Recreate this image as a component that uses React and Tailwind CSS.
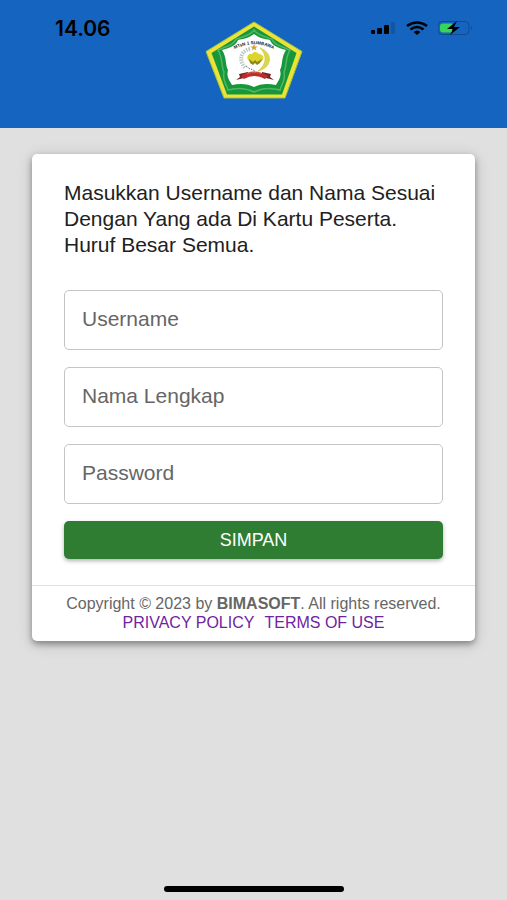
import { useState } from "react";

const fields = [
  { id: "username", label: "Username", type: "text" },
  { id: "fullname", label: "Nama Lengkap", type: "text" },
  { id: "password", label: "Password", type: "password" },
];

function SchoolLogo() {
  return (
    <svg viewBox="0 0 98 78" className="h-[78px] w-[98px]" role="img" aria-label="MTsN 1 Sumbawa">
      <path d="M49 1 97 30.500 80 77H19L1 30.500Z" fill="#ece238" stroke="#9ec43c" />
      <path d="M49 5.500 91.500 32 77 73.500H22L6.500 32Z" fill="#16973a" />
      <path
        d="M49 9C53 15 61 16 67 18C69 24 76 25 85 29C80 37 82 45 79 51C81 59 77 62 75 69C64 66 57 67 49 71C41 67 34 66 23 69C21 62 17 59 19 51C16 45 18 37 13 29C22 25 29 24 31 18C37 16 45 15 49 9Z"
        fill="none"
        stroke="#54b568"
        strokeWidth="1.500"
      />
      <path
        d="M49 13C54 17 60 18 65 19C67 25 74 27 81 29C76 36 78 44 75 49C77 56 73 60 71 64C62 62 55 63 49 66C43 63 36 62 27 64C25 60 21 56 23 49C20 44 22 36 17 29C24 27 31 25 33 19C38 18 44 17 49 13Z"
        fill="#fff"
      />
      <path id="logo-arc" d="M27 29.500Q49 17 71 29.500" fill="none" />
      <text fontSize="4.500" fontWeight="700" fontFamily="Liberation Sans, sans-serif" fill="#222">
        <textPath href="#logo-arc" startOffset="50%" textAnchor="middle">
          MTsN 1 SUMBAWA
        </textPath>
      </text>
      <path d="M45 28C34 30 34 42 41 47" fill="none" stroke="#bfc8c4" strokeWidth="4" strokeDasharray="1.500 1" />
      <path d="M55 27C69 32 67 47 53 50C62 43 62 34 55 27Z" fill="#ddd64b" stroke="#c9c342" strokeWidth=".6" />
      <path d="m49 23 1 2.500h3l-2.500 1.500 1 2.500-2.500-1.500-2.500 1.500 1-2.500-2.500-1.500h3z" fill="#c9a43a" />
      <path d="M44 40C40 36 44 32 47 33C49 30 52 31 54 33C58 33 60 37 57 40L52 42 50 40 48 42Z" fill="#ded52c" />
      <path d="m44 38 4 3 2-2 2 2 5-3-2 4-3 2-2-2-2 2-3-2z" fill="#8d8718" />
      <path d="M41 45l4 3M46 48l4 2" stroke="#555" strokeDasharray="1 1" />
      <path d="m31 59 4-3-1-3 9-2v4l-4 2zm38 0-4-3 1-3-9-2v4l4 2z" fill="#762626" />
      <path d="M36 55Q49 46 63 55L60 58Q49 52 39 58Z" fill="#be2d29" />
      <path d="M42 53Q49 50 57 53" fill="none" stroke="#df8178" strokeDasharray="1 .7" />
    </svg>
  );
}

function StatusIcons() {
  return (
    <div className="flex items-center gap-[10px] text-black">
      <svg viewBox="0 0 26 12" className="h-3 w-[26px]" aria-hidden="true">
        <rect x="1" y="8" width="4" height="4" rx="1" />
        <rect x="7" y="6" width="5" height="6" rx="1" />
        <rect x="14" y="3" width="5" height="9" rx="1" />
        <rect x="21" width="4" height="12" rx="1" opacity=".15" />
      </svg>
      <svg viewBox="0 0 22 14" className="h-[14px] w-[22px]" fill="none" stroke="currentColor" strokeWidth="2.600" aria-hidden="true">
        <path d="M1 5Q11-2 21 5M4.500 8.500Q11 3.500 17.500 8.500" />
        <path d="M7.500 11Q11 8 14.500 11L11 14Z" fill="currentColor" stroke="none" />
      </svg>
      <svg viewBox="0 0 35 16" className="h-4 w-[35px]" aria-hidden="true">
        <rect x="0" y="1.500" width="31" height="13" rx="4" fill="none" stroke="#124a8e" />
        <path d="M5 3.500h9v9H5q-3 0-3-3v-3q0-3 3-3Z" fill="#35d65b" />
        <path d="M33 6q2 2 0 4z" fill="#124a8e" />
        <path d="m19 1-10 8h6l-3 6 10-8h-6z" />
      </svg>
    </div>
  );
}

function TextField({ id, label, type, value, onChange }) {
  return (
    <div className="relative">
      <input
        id={id}
        name={id}
        type={type}
        placeholder=" "
        value={value}
        onChange={onChange}
        className="peer block h-[60px] w-full rounded-[5px] border border-[#c4c4c4] px-[18px] text-[21px] text-[#212121] focus:outline-[#1565c0]"
      />
      <label
        htmlFor={id}
        className="pointer-events-none absolute -top-2 left-[14px] bg-white px-1 text-xs leading-4 text-[#666] peer-placeholder-shown:top-4 peer-placeholder-shown:text-[21px] peer-placeholder-shown:leading-[26px]"
      >
        {label}
      </label>
    </div>
  );
}

export default function App() {
  const [values, setValues] = useState({ username: "", fullname: "", password: "" });

  const handleChange = (e) => {
    setValues({ ...values, [e.target.name]: e.target.value });
  };

  return (
    <div className="flex min-h-screen flex-col bg-[#e0e0e0] font-['Liberation_Sans',Arial,sans-serif]">
      <header className="grid h-32 grid-cols-[1fr_auto_1fr] items-start bg-[#1565c0]">
        <time className="pt-4 pl-[55px] font-['Inter','Liberation_Sans',sans-serif] text-[21px] leading-[26px] font-semibold text-black">
          14.06
        </time>
        <div className="pt-[21px]">
          <SchoolLogo />
        </div>
        <div className="flex justify-end pt-5 pr-[34px]">
          <StatusIcons />
        </div>
      </header>

      <main className="px-8 pt-[26px]">
        <div className="rounded-[5px] bg-white shadow-[0_3px_6px_rgba(0,0,0,0.35),0_3px_16px_rgba(0,0,0,0.16)]">
          <form className="px-8 pt-[26px] pb-[26px]" onSubmit={(e) => e.preventDefault()}>
            <p className="mb-[32px] text-[21px] leading-[26px] text-[#212121]">
              Masukkan Username dan Nama Sesuai
              <br />
              Dengan Yang ada Di Kartu Peserta.
              <br />
              Huruf Besar Semua.
            </p>
            <div className="flex flex-col gap-[17px]">
              {fields.map((field) => (
                <TextField key={field.id} {...field} value={values[field.id]} onChange={handleChange} />
              ))}
              <button
                type="submit"
                className="h-[38px] rounded-[5px] bg-[#2e7d32] text-[18px] text-white shadow-[0_2px_4px_rgba(0,0,0,0.3)]"
              >
                SIMPAN
              </button>
            </div>
          </form>
          <footer className="border-t border-[#e0e0e0] pt-2 pb-[9px] text-center text-[16px] leading-[19px] text-[#666]">
            <p>
              Copyright © 2023 by <strong>BIMASOFT</strong>. All rights reserved.
            </p>
            <nav className="flex justify-center gap-[10px] text-[#7023a0]">
              <a href="#privacy">PRIVACY POLICY</a>
              <a href="#terms">TERMS OF USE</a>
            </nav>
          </footer>
        </div>
      </main>

      <div className="mx-auto mt-auto mb-2 h-[6px] w-[180px] rounded-full bg-black" />
    </div>
  );
}
